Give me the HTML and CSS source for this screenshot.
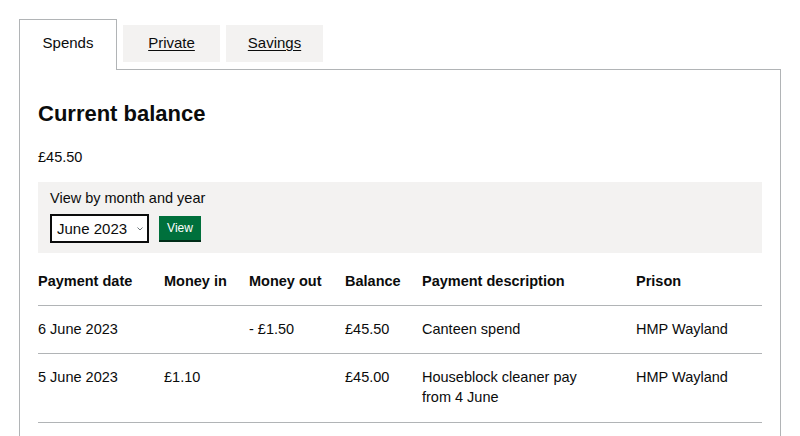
FILE: index.html
```html
<!DOCTYPE html>
<html lang="en">
<head>
<meta charset="utf-8">
<title>Transactions</title>
<link rel="stylesheet" href="styles.css">
</head>
<body>
<div class="page">
  <ul class="tabs">
    <li class="tab tab-selected"><span class="tab-label">Spends</span></li>
    <li class="tab"><a class="tab-link" href="#private">Private</a></li>
    <li class="tab"><a class="tab-link" href="#savings">Savings</a></li>
  </ul>
  <div class="panel">
    <h2 class="heading">Current balance</h2>
    <p class="balance">£45.50</p>
    <form class="filter">
      <label class="filter-label" for="month">View by month and year</label>
      <div class="filter-row">
        <div class="select-wrap">
          <select id="month" class="select">
            <option>June 2023</option>
          </select>
          <svg class="chevron" width="6" height="4" viewBox="0 0 6 4"><path d="M0.5 0.5 L3 3 L5.5 0.5" fill="none" stroke="#6f777b" stroke-width="1"/></svg>
        </div>
        <button type="button" class="button">View</button>
      </div>
    </form>
    <table class="table">
      <colgroup>
        <col class="c-date"><col class="c-in"><col class="c-out"><col class="c-bal"><col class="c-desc"><col class="c-prison">
      </colgroup>
      <thead>
        <tr>
          <th>Payment date</th>
          <th>Money in</th>
          <th>Money out</th>
          <th>Balance</th>
          <th>Payment description</th>
          <th>Prison</th>
        </tr>
      </thead>
      <tbody>
        <tr>
          <td>6 June 2023</td>
          <td></td>
          <td>- £1.50</td>
          <td>£45.50</td>
          <td class="desc">Canteen spend</td>
          <td>HMP Wayland</td>
        </tr>
        <tr>
          <td>5 June 2023</td>
          <td>£1.10</td>
          <td></td>
          <td>£45.00</td>
          <td class="desc">Houseblock cleaner pay from 4 June</td>
          <td>HMP Wayland</td>
        </tr>
      </tbody>
    </table>
  </div>
</div>
</body>
</html>
```
FILE: styles.css
```css
* { box-sizing: border-box; }
html, body {
  margin: 0;
  padding: 0;
  background: #ffffff;
  color: #0b0c0c;
  font-family: "Liberation Sans", Arial, sans-serif;
}
.page {
  padding: 19px 19px 0 19px;
}
.tabs {
  list-style: none;
  margin: 0;
  padding: 0;
  display: flex;
  align-items: flex-start;
  gap: 6px;
  height: 50px;
}
.tab {
  width: 97px;
  margin-top: 6px;
  padding: 8px 0 9px;
  background: #f3f2f1;
  text-align: center;
  font-size: 15px;
  line-height: 20px;
}
.tab-selected {
  width: 98px;
  margin-top: 0;
  padding: 13px 0 17px;
  background: #ffffff;
  border: 1px solid #b1b4b6;
  border-bottom: none;
  position: relative;
  z-index: 1;
}
.tab-link {
  color: #0b0c0c;
  text-decoration: underline;
  text-decoration-thickness: 1px;
  text-underline-offset: 2px;
}
.panel {
  border: 1px solid #b1b4b6;
  padding: 30px 18px 30px;
}
.heading {
  margin: 0;
  font-size: 22px;
  line-height: 28px;
  font-weight: 700;
}
.balance {
  margin: 19px 0 0;
  font-size: 14.5px;
  line-height: 20px;
}
.filter {
  margin: 15px 0 0;
  background: #f3f2f1;
  padding: 6px 12px 10px;
}
.filter-label {
  display: block;
  font-size: 14.5px;
  line-height: 20px;
}
.filter-row {
  display: flex;
  align-items: flex-start;
  margin-top: 6px;
}
.select-wrap {
  position: relative;
  width: 99px;
  height: 29px;
}
.select {
  appearance: none;
  -webkit-appearance: none;
  width: 99px;
  height: 29px;
  margin: 0;
  border: 2px solid #0b0c0c;
  border-radius: 0;
  background: #ffffff;
  color: #0b0c0c;
  font-family: "Liberation Sans", Arial, sans-serif;
  font-size: 15px;
  line-height: 20px;
  padding: 0 0 0 5px;
}
.chevron {
  position: absolute;
  right: 6px;
  top: 13px;
}
.button {
  margin: 2px 0 0 10px;
  width: 42px;
  height: 24px;
  padding: 0;
  border: none;
  border-radius: 0;
  background: #00703c;
  box-shadow: 0 2px 0 #002d18;
  color: #ffffff;
  font-family: "Liberation Sans", Arial, sans-serif;
  font-size: 12px;
  line-height: 24px;
  text-align: center;
}
.table {
  margin-top: 4px;
  width: 724px;
  table-layout: fixed;
  border-collapse: collapse;
  border-spacing: 0;
}
.c-date { width: 126px; }
.c-in { width: 85px; }
.c-out { width: 96px; }
.c-bal { width: 77px; }
.c-desc { width: 214px; }
.c-prison { width: 126px; }
.table th,
.table td {
  text-align: left;
  vertical-align: top;
  font-size: 14.5px;
  line-height: 20px;
  border-bottom: 1px solid #b1b4b6;
  padding: 13px 10px 14px 0;
}
.table th {
  font-weight: 700;
  padding: 14px 10px 14px 0;
}
.table td.desc {
  padding-right: 30px;
}
.table tbody tr:last-child td {
  padding-bottom: 15px;
}
```
